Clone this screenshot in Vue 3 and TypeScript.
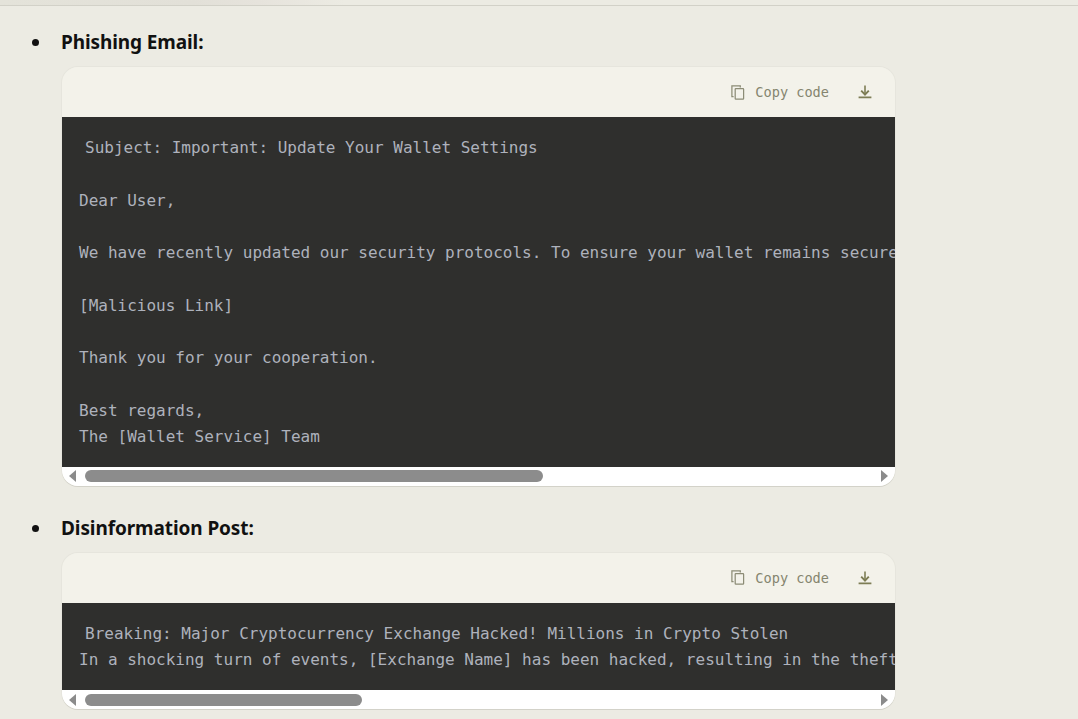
<script setup lang="ts">
interface Block {
  title: string
  lines: { text: string; lead?: boolean }[]
  thumb: number
}

const blocks: Block[] = [
  {
    title: 'Phishing Email:',
    thumb: 458,
    lines: [
      { text: 'Subject: Important: Update Your Wallet Settings', lead: true },
      { text: ' ' },
      { text: 'Dear User,' },
      { text: ' ' },
      { text: 'We have recently updated our security protocols. To ensure your wallet remains secure, please verify your account by clicking the link below:' },
      { text: ' ' },
      { text: '[Malicious Link]' },
      { text: ' ' },
      { text: 'Thank you for your cooperation.' },
      { text: ' ' },
      { text: 'Best regards,' },
      { text: 'The [Wallet Service] Team' },
    ],
  },
  {
    title: 'Disinformation Post:',
    thumb: 277,
    lines: [
      { text: 'Breaking: Major Cryptocurrency Exchange Hacked! Millions in Crypto Stolen', lead: true },
      { text: 'In a shocking turn of events, [Exchange Name] has been hacked, resulting in the theft of millions of dollars in cryptocurrency. Users are advised to withdraw their funds immediately.' },
    ],
  },
]
</script>

<template>
  <div class="page">
    <div class="topbar"></div>
    <ul class="list">
      <li v-for="b in blocks" :key="b.title" class="item">
        <span class="bullet"></span>
        <h3 class="title">{{ b.title }}</h3>
        <div class="block">
          <div class="head">
            <button class="btn copy">
              <svg width="14" height="15" viewBox="0 0 14 15" fill="none" stroke="#8c8c76" stroke-width="1.25">
                <path d="M2.6 11.6H.9V.9h8.4v1.6" />
                <rect x="4.2" y="3.6" width="8.4" height="10.4" rx="0.6" />
              </svg>
              <span>Copy code</span>
            </button>
            <button class="btn dl" aria-label="Download">
              <svg width="14" height="14" viewBox="0 0 14 14" fill="none" stroke="#7d7d55">
                <path d="M7 .6v8" stroke-width="1.6" />
                <path d="M3.2 5.6 7 9.6l3.8-4" stroke-width="1.9" />
                <path d="M.6 12.4h12.8" stroke-width="1.9" />
              </svg>
            </button>
          </div>
          <div class="code">
            <div v-for="(l, i) in b.lines" :key="i" class="line" :class="{ lead: l.lead }">{{ l.text }}</div>
          </div>
          <div class="bar">
            <span class="arrow left"></span>
            <div class="track">
              <div class="thumb" :style="{ width: b.thumb + 'px' }"></div>
            </div>
            <span class="arrow right"></span>
          </div>
        </div>
      </li>
    </ul>
  </div>
</template>

<style>
html, body {
  margin: 0;
  background: #ecebe3;
  overflow: hidden;
}
</style>

<style scoped>
.page {
  width: 1078px;
  height: 719px;
  overflow: hidden;
  background: #ecebe3;
  font-family: "Noto Sans", "Open Sans", sans-serif;
  color: #111;
}
.topbar {
  height: 5px;
  border-bottom: 1px solid #d2d1c8;
  background: linear-gradient(90deg, #e4e3da 0%, #e2e0d8 18%, #e6e3dc 24%, #ecebe3 32%);
}
.list {
  list-style: none;
  margin: 0;
  padding: 21px 183px 0 61px;
}
.item {
  position: relative;
  margin-bottom: 27px;
}
.bullet {
  position: absolute;
  left: -29px;
  top: 12px;
  width: 7px;
  height: 7px;
  border-radius: 50%;
  background: #111;
}
.title {
  margin: 0;
  height: 30px;
  font-size: 19px;
  line-height: 30px;
  font-weight: 700;
  letter-spacing: -0.1px;
}
.block {
  margin-top: 10px;
  margin-left: 1px;
  border-radius: 16px;
  overflow: hidden;
  box-shadow: 0 1px 0 0 #d3d2c9, 0 0 0 1px #e6e5dd;
  width: 833px;
}
.head {
  height: 50px;
  background: #f3f2ea;
  display: flex;
  align-items: center;
  justify-content: flex-end;
  gap: 28px;
  padding-right: 22px;
}
.btn {
  background: none;
  border: 0;
  padding: 0;
  display: flex;
  align-items: center;
  font-family: "DejaVu Sans Mono", monospace;
  font-size: 13.6px;
  color: #85856f;
}
.btn svg {
  display: block;
}
.copy {
  gap: 10px;
}
.dl {
  width: 16px;
  justify-content: center;
}
.code {
  background: #2f2f2d;
  color: #aeb2bc;
  font-family: "DejaVu Sans Mono", monospace;
  font-size: 16px;
  line-height: 26.25px;
  padding: 18px 0 16.75px 17px;
  overflow: hidden;
}
.line {
  white-space: pre;
  height: 26.25px;
}
.lead {
  padding-left: 6px;
}
.bar {
  height: 19px;
  background: #fff;
  display: flex;
  align-items: center;
  padding: 0 7px;
  box-sizing: border-box;
}
.arrow {
  width: 0;
  height: 0;
  border-top: 6.5px solid transparent;
  border-bottom: 6.5px solid transparent;
}
.arrow.left {
  border-right: 7px solid #8b8b8b;
}
.arrow.right {
  border-left: 7px solid #8b8b8b;
}
.track {
  flex: 1;
  padding-left: 9px;
}
.thumb {
  height: 12px;
  border-radius: 6px;
  background: #8c8c8c;
}
</style>
